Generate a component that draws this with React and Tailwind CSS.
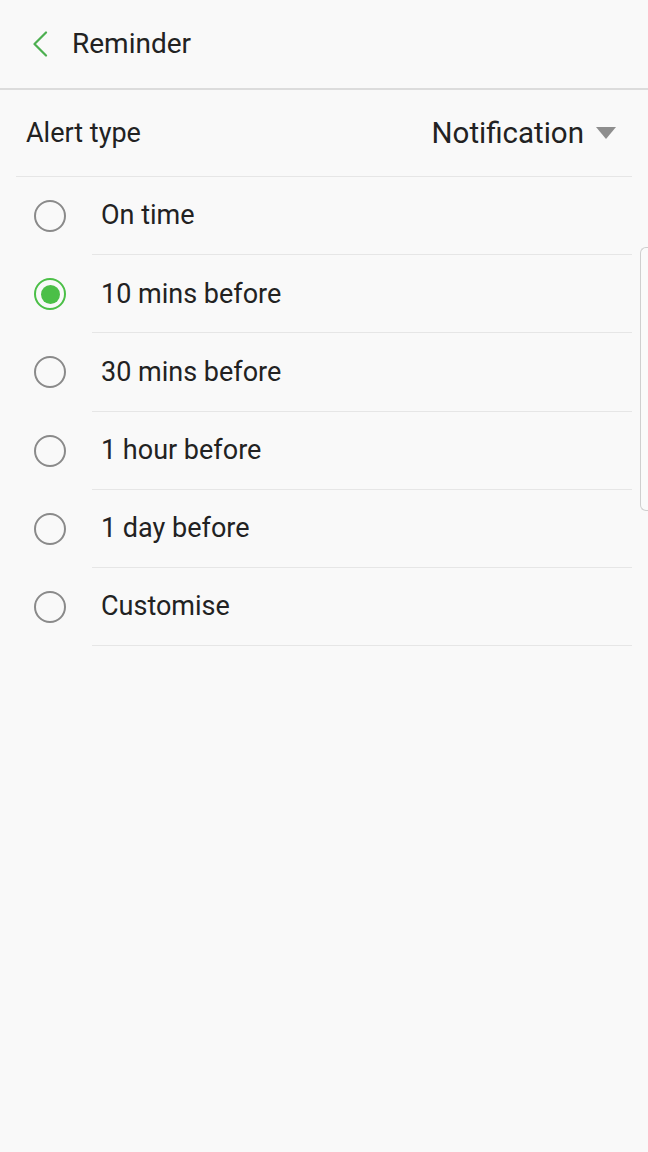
import React, { useState } from 'react';

const options = [
  'On time',
  '10 mins before',
  '30 mins before',
  '1 hour before',
  '1 day before',
  'Customise',
];

const Radio = ({ checked }) => (
  <div
    className={`w-[32px] h-[32px] rounded-full border-2 flex items-center justify-center ${
      checked ? 'border-[#4bbf47]' : 'border-[#8a8a8a]'
    }`}
  >
    {checked && <div className="w-[19px] h-[19px] rounded-full bg-[#4bbf47]" />}
  </div>
);

const App = () => {
  const [selected, setSelected] = useState(1);

  return (
    <div
      className="relative w-[648px] h-[1152px] bg-[#f9f9f9] text-[#222222] overflow-hidden"
      style={{ fontFamily: 'Roboto, "Noto Sans", sans-serif' }}
    >
      {/* Header */}
      <div className="h-[90px] flex items-center border-b-2 border-[#dcdcdc]">
        <svg className="ml-[32px] w-[16px] h-[26px]" viewBox="0 0 16 26" fill="none">
          <path d="M14 1.5 L2.5 13 L14 24.5" stroke="#4caf50" strokeWidth="2.2" strokeLinecap="round" strokeLinejoin="round" />
        </svg>
        <span className="ml-[24px] text-[28px] leading-none">Reminder</span>
      </div>

      {/* Alert type */}
      <div className="mx-[16px] h-[87px] flex items-center justify-between border-b border-[#e6e6e6]">
        <span className="ml-[10px] text-[27px]">Alert type</span>
        <div className="flex items-center mr-[16px]">
          <span className="text-[29.5px]">Notification</span>
          <svg className="ml-[12px] w-[20px] h-[12px]" viewBox="0 0 20 12">
            <path d="M0 0 L20 0 L10 12 Z" fill="#8e8e8e" />
          </svg>
        </div>
      </div>

      {/* Options */}
      <div className="flex flex-col">
        {options.map((label, i) => (
          <div
            key={label}
            className="flex items-center h-[78.2px] cursor-pointer"
            onClick={() => setSelected(i)}
          >
            <div className="w-[92px] flex justify-start pl-[34px]">
              <Radio checked={selected === i} />
            </div>
            <div className="flex-1 mr-[16px] h-full flex items-center border-b border-[#e6e6e6] pl-[9px]">
              <span className="text-[27px]">{label}</span>
            </div>
          </div>
        ))}
      </div>

      {/* Edge handle */}
      <div className="absolute right-0 top-[247px] w-[8px] h-[264px] rounded-l-[6px] border border-r-0 border-[#cfcfcf] bg-[#fafafa]" />
    </div>
  );
};

export default App;
